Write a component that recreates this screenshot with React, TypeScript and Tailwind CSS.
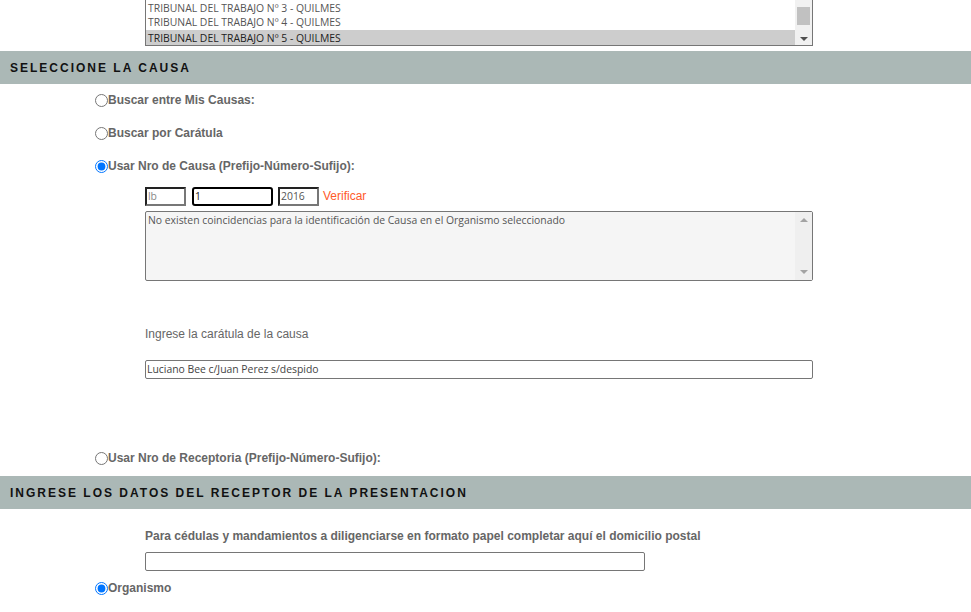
import React from 'react'

const label = "font-['Liberation_Sans',Arial,sans-serif] text-[12px] text-[#666]"
const field = "font-['Open_Sans','Noto_Sans',sans-serif] text-[10.4px]"

function Radio({ checked, text }: { checked?: boolean; text: string }) {
  return (
    <label className={`flex items-center h-[16px] pl-[95px] font-bold ${label}`}>
      <input
        type="radio"
        name="causa"
        defaultChecked={checked}
        className="m-0 w-[13px] h-[13px] accent-[#0075ff]"
      />
      <span>{text}</span>
    </label>
  )
}

function Band({ title }: { title: string }) {
  return (
    <div className="h-[33px] bg-[#abb8b6] flex items-center pl-[10px]">
      <span className="font-['Liberation_Sans',Arial,sans-serif] text-[12px] font-bold tracking-[2px] text-[#111]">
        {title}
      </span>
    </div>
  )
}

export default function App() {
  const rows = [
    'TRIBUNAL DEL TRABAJO Nº 3 - QUILMES',
    'TRIBUNAL DEL TRABAJO Nº 4 - QUILMES',
    'TRIBUNAL DEL TRABAJO Nº 5 - QUILMES',
  ]

  return (
    <div className="w-[971px] h-[612px] overflow-hidden bg-white">
      {/* listbox, scrolled to bottom */}
      <div className="h-[46px] overflow-hidden flex flex-col justify-end">
        <div className="ml-[145px] w-[668px] border border-[#767676] flex">
          <div className={`flex-1 pt-[1px] text-[#555] ${field}`}>
            {rows.map((r, i) => (
              <div
                key={r}
                className={`leading-[16px] pl-[2px] ${i === 2 ? 'h-[15px] bg-[#cdcdcd] text-[#222]' : i === 1 ? 'h-[16px]' : 'h-[14px] leading-[12px]'}`}
              >
                {r}
              </div>
            ))}
          </div>
          <div className="w-[17px] bg-[#f1f1f1] flex flex-col items-center justify-end pb-[4px] relative">
            <div className="absolute left-[2px] top-[8px] w-[13px] h-[18px] bg-[#c1c1c1]" />
            <div className="w-0 h-0 border-l-[4px] border-r-[4px] border-t-[4px] border-l-transparent border-r-transparent border-t-[#505050]" />
          </div>
        </div>
      </div>

      <div className="mt-[5px]">
        <Band title="SELECCIONE LA CAUSA" />
      </div>

      <div className="pt-[8px] flex flex-col gap-[17px]">
        <Radio text="Buscar entre Mis Causas:" />
        <Radio text="Buscar por Carátula" />
        <Radio checked text="Usar Nro de Causa (Prefijo-Número-Sufijo):" />
      </div>

      <div className="pl-[145px] pt-[13px]">
        <div className="flex items-center h-[19px]">
          <div className={`w-[41px] h-[19px] border-2 border-t-[#222] border-l-[#222] border-r-[#777] border-b-[#777] leading-[15px] text-[#888] pl-[1px] ${field}`}>
            lb
          </div>
          <div className={`ml-[6px] w-[81px] h-[19px] border-2 border-black rounded-[3px] leading-[15px] text-[#222] pl-[1px] ${field}`}>
            1
          </div>
          <div className={`ml-[5px] w-[41px] h-[19px] border-2 border-t-[#222] border-l-[#222] border-r-[#777] border-b-[#777] leading-[15px] text-[#555] pl-[1px] ${field}`}>
            2016
          </div>
          <span className="ml-[4px] -mt-[2px] font-['Liberation_Sans',Arial,sans-serif] text-[12px] text-[#ff5a2a]">
            Verificar
          </span>
        </div>

        <div className="mt-[5px] w-[668px] h-[70px] border border-[#767676] rounded-[2px] bg-[#f5f5f5] flex">
          <div className={`flex-1 pl-[2px] pt-[1px] text-[#555] leading-[14px] ${field}`}>
            No existen coincidencias para la identificación de Causa en el Organismo seleccionado
          </div>
          <div className="w-[17px] bg-[#efefef] flex flex-col items-center justify-between py-[6px]">
            <div className="w-0 h-0 border-l-[4px] border-r-[4px] border-b-[4px] border-l-transparent border-r-transparent border-b-[#a3a3a3]" />
            <div className="w-0 h-0 border-l-[4px] border-r-[4px] border-t-[4px] border-l-transparent border-r-transparent border-t-[#a3a3a3]" />
          </div>
        </div>

        <div className={`mt-[46px] h-[14px] leading-[14px] ${label}`}>Ingrese la carátula de la causa</div>

        <div className={`mt-[19px] w-[668px] h-[19px] border border-[#767676] rounded-[2px] pl-[1px] leading-[17px] text-[#444] ${field}`}>
          Luciano Bee c/Juan Perez s/despido
        </div>
      </div>

      <div className="pt-[71px]">
        <Radio text="Usar Nro de Receptoria (Prefijo-Número-Sufijo):" />
      </div>

      <div className="mt-[10px]">
        <Band title="INGRESE LOS DATOS DEL RECEPTOR DE LA PRESENTACION" />
      </div>

      <div className="pl-[145px] pt-[20px]">
        <div className={`h-[14px] leading-[14px] font-bold ${label}`}>
          Para cédulas y mandamientos a diligenciarse en formato papel completar aquí el domicilio postal
        </div>
        <div className="mt-[9px] w-[500px] h-[19px] border border-[#767676] rounded-[2px]" />
      </div>

      <div className="pt-[9px]">
        <label className={`flex items-center h-[16px] pl-[95px] font-bold ${label}`}>
          <input type="radio" name="rec" defaultChecked className="m-0 w-[13px] h-[13px] accent-[#0075ff]" />
          <span>Organismo</span>
        </label>
      </div>
    </div>
  )
}
